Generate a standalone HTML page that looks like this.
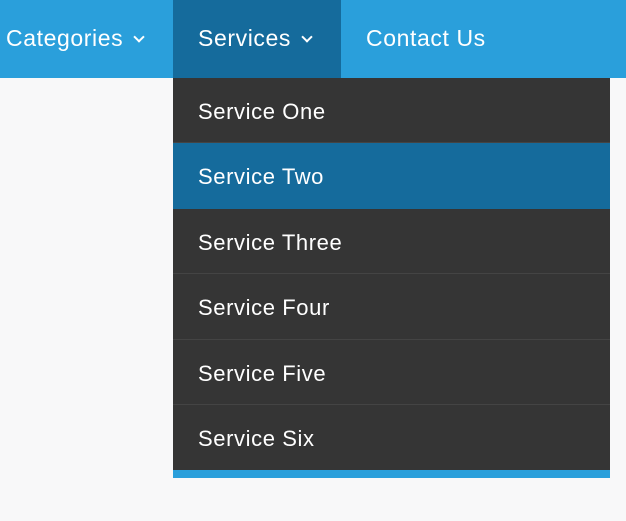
<!DOCTYPE html>
<html><head><style>
*{margin:0;padding:0;box-sizing:border-box}
body{width:626px;height:521px;background:#f8f8f9;font-family:"Liberation Sans",Arial,sans-serif;position:relative;overflow:hidden;letter-spacing:0.6px}
.nav{position:absolute;left:0;top:0;width:626px;height:78px;background:#2a9fdb}
.nav div{position:absolute;top:0;height:78px;line-height:76px;color:#fff;font-size:23px}
.act{background:#156b9c}
.chev{display:inline-block;width:8px;height:8px;border-right:2px solid #fff;border-bottom:2px solid #fff;transform:rotate(45deg);margin-left:12px;position:relative;top:-5px}
.dd{position:absolute;left:173px;top:78px;width:437px;height:400px;background:#353535;border-bottom:8px solid #2a9fdb}
.dd div{height:65.4px;line-height:67px;padding-left:25px;color:#fff;font-size:22px;border-bottom:1px solid #444}
.dd .on{background:#156b9c;border-bottom-color:#156b9c}
</style></head><body>
<div class="nav">
<div style="left:6px">Categories<span class="chev"></span></div>
<div class="act" style="left:173px;width:168px;padding-left:25px">Services<span class="chev"></span></div>
<div style="left:366px">Contact Us</div>
</div>
<div class="dd">
<div>Service One</div>
<div class="on">Service Two</div>
<div>Service Three</div>
<div>Service Four</div>
<div>Service Five</div>
<div style="border:none">Service Six</div>
</div>
</body></html>
